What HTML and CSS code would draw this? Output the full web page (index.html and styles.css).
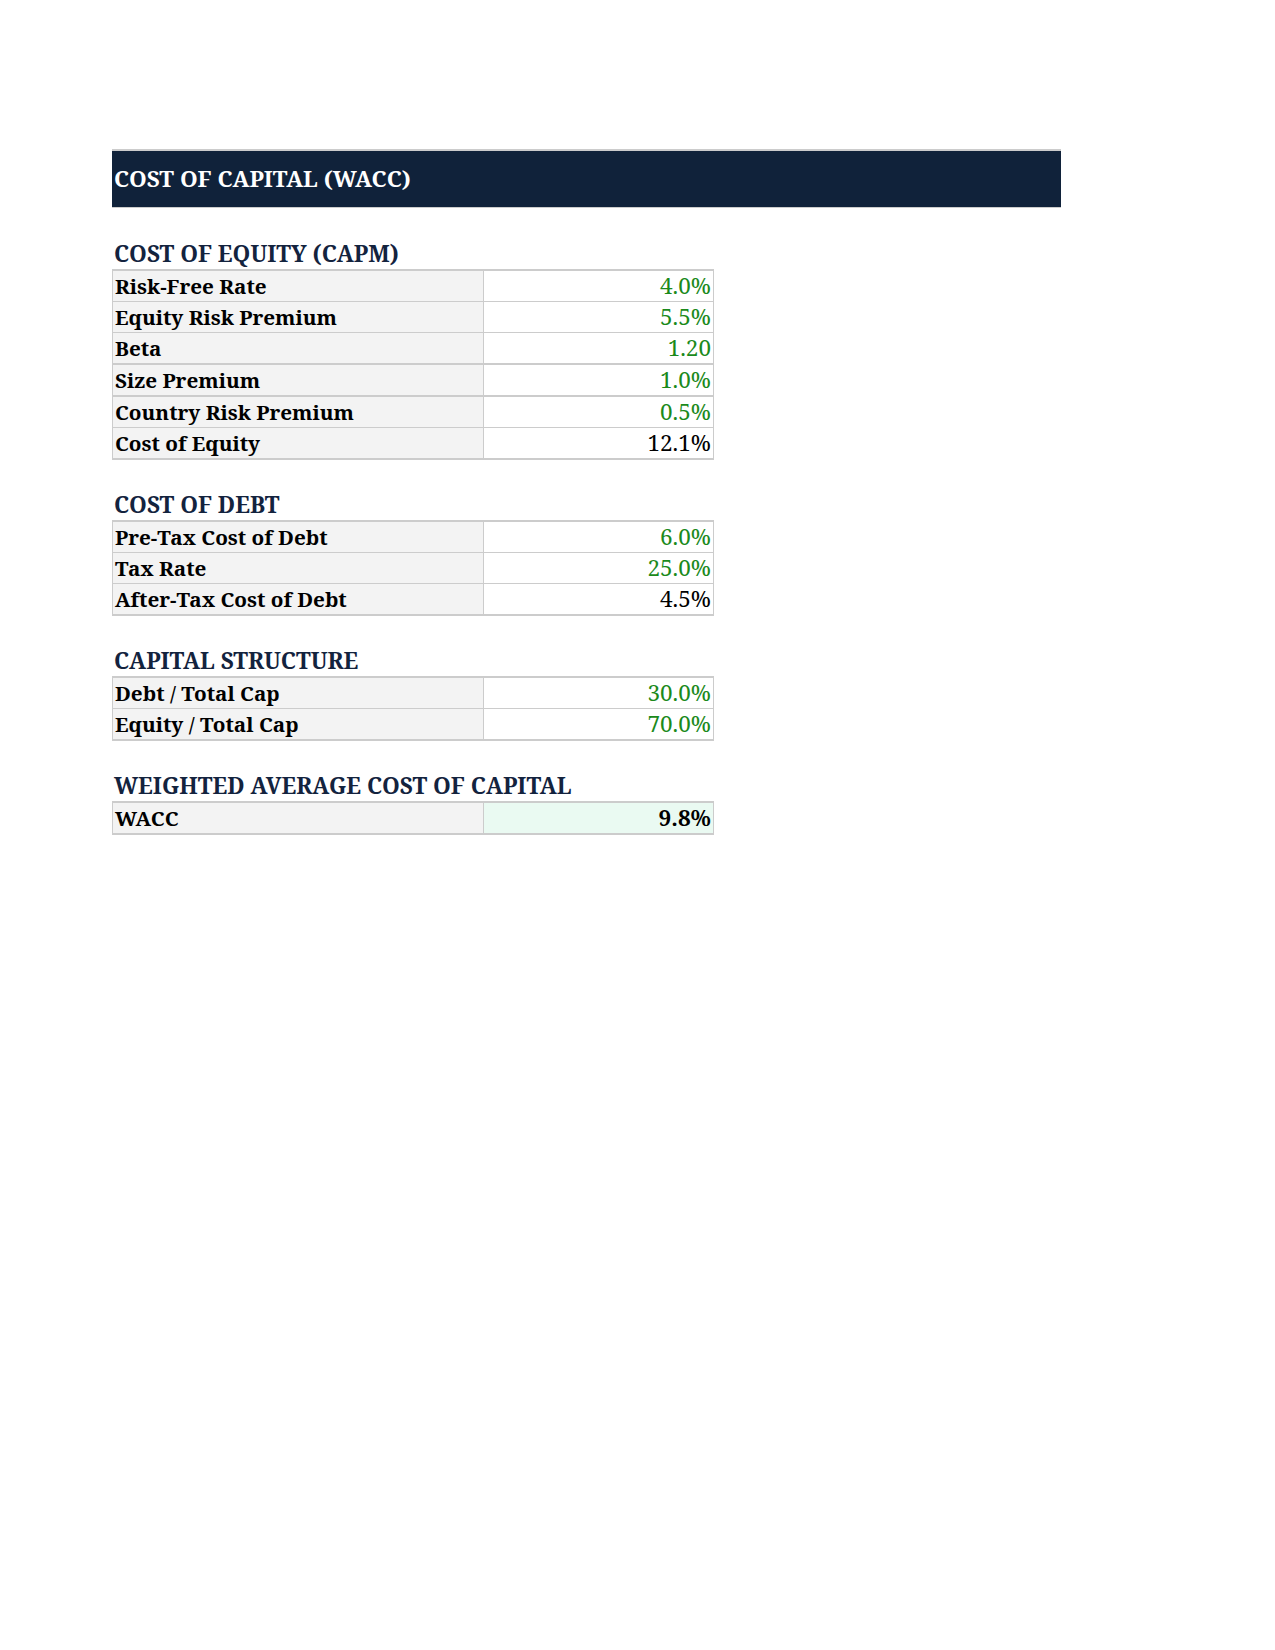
FILE: index.html
```html
<!DOCTYPE html>
<html>
<head>
<meta charset="utf-8">
<title>Cost of Capital (WACC)</title>
<link rel="stylesheet" href="styles.css">
</head>
<body>
<div class="sheet">
  <div class="banner">COST OF CAPITAL (WACC)</div>

  <section class="block first">
    <h2 class="block-title">COST OF EQUITY (CAPM)</h2>
    <table class="grid">
      <tr><td class="lbl">Risk-Free Rate</td><td class="val input">4.0%</td></tr>
      <tr><td class="lbl">Equity Risk Premium</td><td class="val input">5.5%</td></tr>
      <tr><td class="lbl">Beta</td><td class="val input">1.20</td></tr>
      <tr class="thick"><td class="lbl">Size Premium</td><td class="val input">1.0%</td></tr>
      <tr class="thick"><td class="lbl">Country Risk Premium</td><td class="val input">0.5%</td></tr>
      <tr><td class="lbl">Cost of Equity</td><td class="val calc">12.1%</td></tr>
    </table>
  </section>

  <section class="block">
    <h2 class="block-title">COST OF DEBT</h2>
    <table class="grid">
      <tr><td class="lbl">Pre-Tax Cost of Debt</td><td class="val input">6.0%</td></tr>
      <tr><td class="lbl">Tax Rate</td><td class="val input">25.0%</td></tr>
      <tr><td class="lbl">After-Tax Cost of Debt</td><td class="val calc">4.5%</td></tr>
    </table>
  </section>

  <section class="block">
    <h2 class="block-title">CAPITAL STRUCTURE</h2>
    <table class="grid">
      <tr><td class="lbl">Debt / Total Cap</td><td class="val input">30.0%</td></tr>
      <tr><td class="lbl">Equity / Total Cap</td><td class="val input">70.0%</td></tr>
    </table>
  </section>

  <section class="block">
    <h2 class="block-title">WEIGHTED AVERAGE COST OF CAPITAL</h2>
    <table class="grid">
      <tr><td class="lbl">WACC</td><td class="val result">9.8%</td></tr>
    </table>
  </section>
</div>
</body>
</html>
```

FILE: styles.css
```css
html, body {
  margin: 0;
  padding: 0;
  background: #ffffff;
}

body {
  font-family: "Noto Serif", "DejaVu Serif", "Liberation Serif", serif;
  color: #000000;
}

.sheet {
  padding: 149px 0 0 112px;
}

.banner {
  width: 949px;
  height: 59px;
  box-sizing: border-box;
  background: #10223a;
  border-top: 2px solid #cccccc;
  border-bottom: 1px solid #cccccc;
  color: #ffffff;
  font-weight: bold;
  font-size: 22.5px;
  line-height: 56px;
  padding-left: 2px;
  white-space: nowrap;
}

.block {
  margin-top: 29px;
}

.block.first {
  margin-top: 30px;
}

.block-title {
  margin: 0;
  height: 31px;
  line-height: 31px;
  font-size: 22.6px;
  font-weight: bold;
  color: #13233e;
  padding-left: 2px;
  white-space: nowrap;
}

.grid {
  border-collapse: collapse;
  width: 602px;
  table-layout: fixed;
}

.grid td {
  height: 30px;
  padding: 0 2px 0 2px;
  border: 1px solid #cccccc;
  font-size: 20.7px;
  line-height: 30px;
  box-sizing: border-box;
  white-space: nowrap;
}

.grid tr:first-child td {
  border-top: 2px solid #cccccc;
}

.grid tr:last-child td {
  border-bottom: 2px solid #cccccc;
}

.grid tr.thick td {
  border-top: 2px solid #cccccc;
}

.lbl {
  width: 371px;
  background: #f3f3f3;
  font-weight: bold;
}

.grid td.val {
  text-align: right;
  background: #ffffff;
  font-size: 22.5px;
}

.val.input {
  color: #1b8a1b;
}

.val.calc {
  color: #000000;
}

.grid td.val.result {
  background: #eafaf2;
  font-weight: bold;
}
```
